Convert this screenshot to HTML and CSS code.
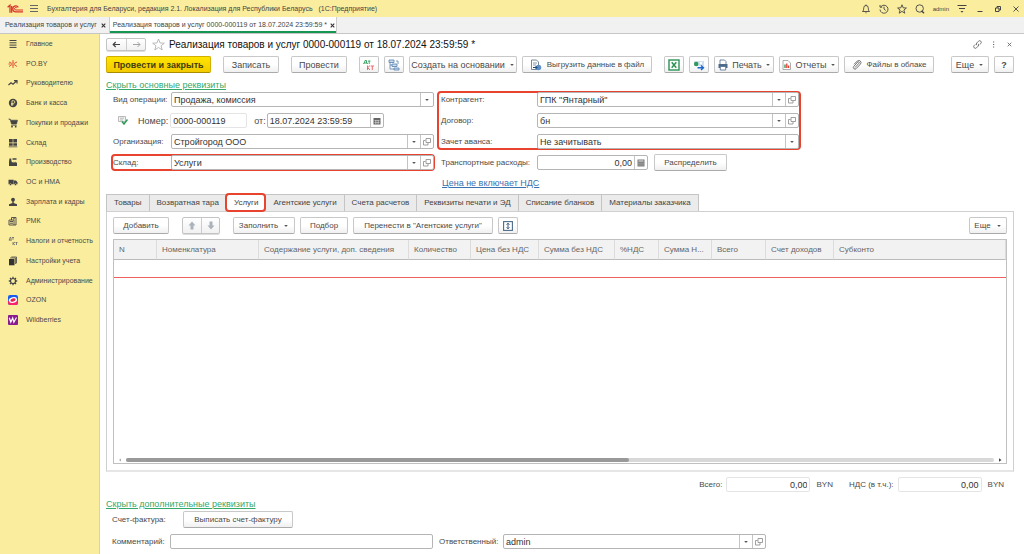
FILE: index.html
```
<!DOCTYPE html>
<html lang="ru">
<head>
<meta charset="utf-8">
<title>Реализация товаров и услуг</title>
<link rel="stylesheet" href="styles.css">
</head>
<body>
<svg class="defs" aria-hidden="true">
  <symbol id="open" viewBox="0 0 8 8"><path d="M3 .5h4.500v4H3zM2.500 2.500h-2v4.500h4.500v-2" fill="none" stroke="#888" stroke-width=".8"/></symbol>
  <symbol id="caret" viewBox="0 0 6 4"><path d="M1.200 1h3.600L3 3z" fill="#555"/></symbol>
</svg>
<header class="topbar">
  <svg class="logo" viewBox="0 0 17 10"><g fill="none" stroke="#d9342b" stroke-width="1.300"><path d="M.6 3.200 3 1.200v7.600M4.700 2v6.800"/><path d="M11.300 3.300A3 3 0 1 0 9 7.900h7"/><path d="M9.900 4A1.300 1.300 0 1 0 9 6h7" stroke-width="1"/></g></svg>
  <button class="bare" aria-label="Меню"><svg width="9" height="9" viewBox="0 0 9 9"><path d="M0 1.500h8M0 4.500h8M0 7.500h8" stroke="#666"/></svg></button>
  <span class="apptitle">Бухгалтерия для Беларуси, редакция 2.1. Локализация для Республики Беларусь &nbsp; (1С:Предприятие)</span>
  <div class="syscmds">
    <button class="bare" aria-label="Уведомления"><svg width="10" height="10" viewBox="0 0 10 10"><path d="M1.500 7.500h7C7.300 6.500 7.500 5.500 7.200 3.700A2.200 2.200 0 0 0 2.800 3.700C2.500 5.500 2.700 6.500 1.500 7.500zM5 1.500V.5" fill="none" stroke="#444" stroke-width=".9"/><path d="M4 8.500h2L5 9.500z" fill="#444"/></svg></button>
    <button class="bare" aria-label="История"><svg width="10" height="10" viewBox="0 0 10 10"><path d="M1.800 2.800A4 4 0 1 1 1 5.500M1 1v2.200h2.200M5 2.700V5l1.700 1.400" fill="none" stroke="#444" stroke-width=".9"/></svg></button>
    <button class="bare" aria-label="Избранное"><svg width="10" height="10" viewBox="0 0 10 10"><path d="M5 .8 6.200 3.800l3.200.2-2.500 2 .9 3.200L5 7.400 2.200 9.200l.9-3.200-2.500-2 3.200-.2z" fill="none" stroke="#444" stroke-width=".9"/></svg></button>
    <button class="bare" aria-label="Поиск"><svg width="10" height="10" viewBox="0 0 10 10"><circle cx="4.700" cy="4.500" r="3.700" fill="none" stroke="#444" stroke-width=".9"/><path d="m6.500 6.800 2.500 2.500" stroke="#444" stroke-width="1.400"/></svg></button>
    <a class="user" href="#">admin</a>
    <button class="bare" aria-label="Настройки"><svg width="10" height="10" viewBox="0 0 10 10"><path d="M.5 1.500h9M2 4.500h6" stroke="#444"/><path d="M3.500 7h3L5 8.800z" fill="#444"/></svg></button>
    <button class="bare win" aria-label="Свернуть"><svg width="8" height="8" viewBox="0 0 8 8"><path d="M1.500 6.500h5" stroke="#444"/></svg></button>
    <button class="bare win" aria-label="Развернуть"><svg width="8" height="8" viewBox="0 0 8 8"><path d="M1.500 3h3.500v3.500H1.500zM3 3V1.500h3.500V5H5" fill="none" stroke="#444"/></svg></button>
    <button class="bare win" aria-label="Закрыть"><svg width="8" height="8" viewBox="0 0 8 8"><path d="m1.500 1.500 5 5m0-5-5 5" stroke="#444" stroke-width=".9"/></svg></button>
  </div>
</header>
<nav class="wintabs">
  <div class="wintab"><a href="#">Реализация товаров и услуг</a><button class="bare" aria-label="Закрыть вкладку"><svg width="5" height="5" viewBox="0 0 5 5"><path d="m.7.7 3.600 3.600m0-3.600L.7 4.300" stroke="#333" stroke-width="1.100"/></svg></button></div>
  <div class="wintab current"><a href="#">Реализация товаров и услуг 0000-000119 от 18.07.2024 23:59:59 *</a><button class="bare" aria-label="Закрыть вкладку"><svg width="5" height="5" viewBox="0 0 5 5"><path d="m.7.7 3.600 3.600m0-3.600L.7 4.300" stroke="#333" stroke-width="1.100"/></svg></button></div>
</nav>
<div class="workspace">
  <nav class="sections">
    <ul>
      <li><a href="#"><svg viewBox="0 0 10 10"><path d="M1.500 1.500h7M1.500 3.800h7M1.500 6.100h7M1.500 8.400h7" stroke="#444"/></svg>Главное</a></li>
      <li><a href="#"><svg viewBox="0 0 10 10"><path d="M5 1v2.500M5 6.500V9M1 3l2.500 1.200M9 3 6.500 4.200M1 7.500l2.500-1.700M9 7.500 6.500 5.800M.5 5h2" stroke="#e0442f" stroke-width=".9"/><circle cx="5" cy="5" r="1.300" fill="none" stroke="#e0442f" stroke-width=".8"/></svg>PO.BY</a></li>
      <li><a href="#"><svg viewBox="0 0 10 10"><path d="m.5 7 2.500-2.300 2 1.500L8.500 3M6 2.700h3v2.800" fill="none" stroke="#444" stroke-width="1.200"/></svg>Руководителю</a></li>
      <li><a href="#"><svg viewBox="0 0 10 10"><circle cx="5" cy="5" r="4.200" fill="#444"/><path d="M4 8V2.700h1.500a1.300 1.300 0 0 1 0 2.700H3M3 6.700h2.500" fill="none" stroke="#fbed9e" stroke-width=".8"/></svg>Банк и касса</a></li>
      <li><a href="#"><svg viewBox="0 0 10 10"><path d="M.5 1h1.700l.4 1.200H9.500L8.500 6h-5L2.300 2" fill="#444" stroke="#444" stroke-width=".6"/><path d="M3.200 7.200h5.500" stroke="#444" stroke-width=".8"/><circle cx="4" cy="8.700" r=".9" fill="#444"/><circle cx="7.700" cy="8.700" r=".9" fill="#444"/></svg>Покупки и продажи</a></li>
      <li><a href="#"><svg viewBox="0 0 10 10"><path d="M1 1h3.700v3.500H1zM5.300 1H9v3.500H5.300zM1 5.200h3.700v2.600H1zM5.300 5.200H9v2.600H5.300zM.7 8.400h8.600v.8H.7z" fill="#444"/></svg>Склад</a></li>
      <li><a href="#"><svg viewBox="0 0 10 10"><path d="M1 9V4.500l.5-3h1.700l.3 3L5.500 6V4.500L7.300 6V4.500L9 6v3z" fill="#444"/><path d="M4.500 2h4" stroke="#444" stroke-width="1.500"/></svg>Производство</a></li>
      <li><a href="#"><svg viewBox="0 0 10 10"><path d="M.5 2.700h5.200v4.600H.5zM6 3.500h2l1.500 1.800v2H6z" fill="#444"/><circle cx="2.500" cy="7.500" r="1" fill="#444" stroke="#fbed9e" stroke-width=".4"/><circle cx="7.500" cy="7.500" r="1" fill="#444" stroke="#fbed9e" stroke-width=".4"/></svg>ОС и НМА</a></li>
      <li><a href="#"><svg viewBox="0 0 10 10"><circle cx="5" cy="2.700" r="1.900" fill="#444"/><path d="M4.300 4h1.400v2L9 7.200V9H1V7.200L4.300 6z" fill="#444"/></svg>Зарплата и кадры</a></li>
      <li><a href="#"><svg viewBox="0 0 10 10"><path d="M1 4h5v5H1zM3.500 4V1.500H8V9H6M2 5.500h3M2 7.200h3M5 2.800h2" fill="none" stroke="#444" stroke-width=".9"/></svg>РМК</a></li>
      <li><a href="#"><svg viewBox="0 0 10 10"><path d="M.8 4.200h3M1.300 4 2 1.500h1V4M4 1.500h2M5 1.500v2.300M5 6v3M7 6 5.200 7.500 7 9M7.500 6.500h2M8.500 6.500V9" fill="none" stroke="#666" stroke-width=".8"/></svg>Налоги и отчетность</a></li>
      <li><a href="#"><svg viewBox="0 0 10 10"><path d="M1 3h5.500v6.300H1z" fill="#333"/><path d="M2 2h5.600v6M3.300 1h5.200v6.300" fill="none" stroke="#444" stroke-width=".8"/></svg>Настройки учета</a></li>
      <li><a href="#"><svg viewBox="0 0 10 10"><circle cx="5" cy="5" r="2.500" fill="none" stroke="#444" stroke-width="1.200"/><path d="M5 .8v1.500M5 7.700v1.500M.8 5h1.500M7.700 5h1.500M2 2l1 1M7 7l1 1M8 2 7 3M3 7 2 8" stroke="#444" stroke-width="1.300"/></svg>Администрирование</a></li>
      <li><a href="#"><svg viewBox="0 0 10 10"><rect width="10" height="10" rx="2" fill="#1a5cf0"/><path d="M0 6h10v2a2 2 0 0 1-2 2H2a2 2 0 0 1-2-2z" fill="#f5266c"/><ellipse cx="5" cy="5" rx="4.200" ry="2.800" fill="#fff" transform="rotate(-15 5 5)"/><ellipse cx="5" cy="5" rx="2.700" ry="1.600" fill="#e8204f" transform="rotate(-15 5 5)"/></svg>OZON</a></li>
      <li><a href="#"><svg viewBox="0 0 10 10"><rect width="10" height="10" rx="1" fill="#8a1a8f"/><path d="m1.300 2.800 1.500 4.400L4.700 3l1.200 4.200L8.500 2.500" fill="none" stroke="#fff" stroke-width="1.200"/></svg>Wildberries</a></li>
    </ul>
  </nav>
  <main class="doc">
    <div class="titlerow">
      <div class="pair"><button aria-label="Назад"><svg width="9" height="7" viewBox="0 0 9 7"><path d="M1 3.500h7M3.700 1 1.200 3.500 3.700 6" fill="none" stroke="#444" stroke-width="1.200"/></svg></button><button aria-label="Вперед"><svg width="9" height="7" viewBox="0 0 9 7"><path d="M1 3.500h7M5.500 1 8 3.500 5.500 6" fill="none" stroke="#999" stroke-width=".9"/></svg></button></div>
      <button class="bare" aria-label="В избранное"><svg width="13" height="13" viewBox="0 0 13 13"><path d="m6.500 1 1.600 4 4.200.2-3.300 2.600 1.200 4.100-3.700-2.400-3.700 2.400L4 7.800.7 5.200 4.900 5z" fill="#fff" stroke="#aaa" stroke-width=".8"/></svg></button>
      <h1>Реализация товаров и услуг 0000-000119 от 18.07.2024 23:59:59 *</h1>
      <div class="formcmds">
        <button class="bare" aria-label="Ссылка"><svg width="9" height="9" viewBox="0 0 9 9"><path d="M3.800 5.200a1.700 1.700 0 0 1 0-2.300L5.500 1.200A1.600 1.600 0 0 1 7.800 3.500L6.700 4.600M5.200 3.800a1.700 1.700 0 0 1 0 2.300L3.500 7.800A1.600 1.600 0 0 1 1.200 5.500L2.300 4.400" fill="none" stroke="#666" stroke-width=".9"/></svg></button>
        <button class="bare" aria-label="Еще"><svg width="9" height="9" viewBox="0 0 9 9"><path d="M4 2h1.200M4 4.500h1.200M4 7h1.200" stroke="#666" stroke-width="1.200"/></svg></button>
        <button class="bare" aria-label="Закрыть"><svg width="9" height="9" viewBox="0 0 9 9"><path d="m2.700 2.700 3.600 3.600m0-3.600L2.700 6.300" stroke="#666" stroke-width=".9"/></svg></button>
      </div>
    </div>
    <div class="cmdbar">
      <button class="btn primary">Провести и закрыть</button>
      <button class="btn b56">Записать</button>
      <button class="btn b56">Провести</button>
      <div class="group">
        <button class="btn icon" aria-label="Проводки"><svg width="12" height="12" viewBox="0 0 12 12"><path d="M.8 5V4h3.500v1M1.500 4 2 1.500h1.500V4M5 2h2.500M6.200 2v3" fill="none" stroke="#2a9d57" stroke-width=".9"/><path d="M4.500 6.500V11M7 6.500 4.700 8.700 7 11M7.700 7H11M9.300 7v4" fill="none" stroke="#ea6b6b"/></svg></button>
        <button class="btn icon" aria-label="Структура"><svg width="12" height="12" viewBox="0 0 12 12"><path d="M1 1h5v2.500H1zM4 5h5v2.500H4zM6 9h5v2H6z" fill="#c9dbee" stroke="#5580ad" stroke-width=".8"/><path d="M2 3.500V10h4M2 6h2M8 2h2v3" fill="none" stroke="#5580ad" stroke-width=".8"/></svg></button>
        <button class="btn b108">Создать на основании<svg class="car"><use href="#caret"/></svg></button>
        <button class="btn b130"><svg width="12" height="12" viewBox="0 0 12 12"><path d="M1.500 1h5l2 2v7.500h-7z" fill="#fff" stroke="#6b7c8e" stroke-width=".9"/><path d="M3 4h4M3 6h3" stroke="#6b7c8e" stroke-width=".8"/><circle cx="8.500" cy="8.500" r="2.700" fill="#5b8fc7"/><path d="M3 8.500h4M5.500 7 7 8.500 5.500 10" fill="none" stroke="#1d4674"/></svg>Выгрузить данные в файл</button>
      </div>
      <div class="group">
        <button class="btn icon" aria-label="Excel"><svg width="12" height="12" viewBox="0 0 12 12"><rect x="1" y="1" width="10" height="10" fill="#fff" stroke="#2b9254" stroke-width="1.400"/><path d="m3.700 3.200 4.600 5.600m0-5.600L3.700 8.800" stroke="#2b9254" stroke-width="1.500"/></svg></button>
        <button class="btn icon" aria-label="Обмен"><svg width="12" height="12" viewBox="0 0 12 12"><path d="M1 2h10v5H1z" fill="#cfe0ef"/><circle cx="3.200" cy="5" r="2.200" fill="#2d9a57"/><circle cx="8" cy="4" r="1.200" fill="#fff"/><path d="M4.500 8.700H10M8 6.500l2.500 2.200L8 11" fill="none" stroke="#1d66d0" stroke-width="1.400"/></svg></button>
        <button class="btn b60"><svg width="12" height="12" viewBox="0 0 12 12"><path d="M3 5V1h4.500L9 2.500V5" fill="#fff" stroke="#4d6a8a" stroke-width=".8"/><path d="M1.500 5h9v4h-9z" fill="#4d6a8a"/><path d="M3.300 7.500h5.400V11H3.300z" fill="#fff" stroke="#4d6a8a" stroke-width=".8"/></svg>Печать<svg class="car"><use href="#caret"/></svg></button>
        <button class="btn b60"><svg width="10" height="12" viewBox="0 0 10 12"><path d="M1 1.500h5L8.500 4v6.500H1z" fill="#fff" stroke="#999" stroke-width=".8"/><path d="M3 9V5.500" stroke="#2b9254" stroke-width="1.300"/><path d="M4.800 9V4.500M6.600 9V6.500" stroke="#e23b2e" stroke-width="1.300"/></svg>Отчеты<svg class="car"><use href="#caret"/></svg></button>
        <button class="btn b90"><svg width="10" height="10" viewBox="0 0 10 10"><path d="M3 7.500 7 3.200a.8.800 0 0 0-1.200-1.200L1.800 6.300a1.600 1.600 0 0 0 2.400 2.300L8.500 4a2.200 2.200 0 0 0-3.200-3L2 4.300" fill="none" stroke="#666" stroke-width=".9"/></svg>Файлы в облаке</button>
      </div>
      <div class="group end">
        <button class="btn b38">Еще<svg class="car"><use href="#caret"/></svg></button>
        <button class="btn icon strong">?</button>
      </div>
    </div>
    <a class="toggle" href="#">Скрыть основные реквизиты</a>
    <div class="props">
      <div class="col">
        <div class="row"><label for="op">Вид операции:</label><div class="field"><select id="op"><option>Продажа, комиссия</option></select><span class="pick over"><svg class="car"><use href="#caret"/></svg></span></div></div>
        <div class="row numrow"><svg width="10" height="9" viewBox="0 0 10 9"><path d="M.5.500h7v5h-7z" fill="#f3f3f3" stroke="#aaa" stroke-width=".8"/><path d="M2 2.200h4M2 4h3" stroke="#aaa" stroke-width=".8"/><path d="m4 5.500 2 2.500L9.500 3.500" fill="none" stroke="#2d9a57" stroke-width="1.500"/></svg><label for="num">Номер:</label><div class="field pale num"><input id="num" value="0000-000119"></div><label for="dt">от:</label><div class="field date"><input id="dt" value="18.07.2024 23:59:59"><button class="pick" aria-label="Календарь"><svg width="8" height="8" viewBox="0 0 8 8"><path d="M.5 1h7v6.500h-7z" fill="#666"/><path d="M1.300 3.500h5.400M1.300 5.500h5.400M2.500 3v4M4 3v4M5.500 3v4" stroke="#ddd" stroke-width=".5"/></svg></button></div></div>
        <div class="row"><label for="org">Организация:</label><div class="field"><input id="org" value="Стройгород ООО"><button class="pick" aria-label="Выбрать"><svg class="car"><use href="#caret"/></svg></button><button class="pick" aria-label="Открыть"><svg class="opn"><use href="#open"/></svg></button></div></div>
        <div class="row marked"><label for="wh">Склад:</label><div class="field"><input id="wh" value="Услуги"><button class="pick" aria-label="Выбрать"><svg class="car"><use href="#caret"/></svg></button><button class="pick" aria-label="Открыть"><svg class="opn"><use href="#open"/></svg></button></div></div>
      </div>
      <div class="col wide">
        <div class="col marked">
          <div class="row"><label for="ca">Контрагент:</label><div class="field"><input id="ca" value="ГПК &quot;Янтарный&quot;"><button class="pick" aria-label="Выбрать"><svg class="car"><use href="#caret"/></svg></button><button class="pick" aria-label="Открыть"><svg class="opn"><use href="#open"/></svg></button></div></div>
          <div class="row"><label for="dog">Договор:</label><div class="field"><input id="dog" value="бн"><button class="pick" aria-label="Выбрать"><svg class="car"><use href="#caret"/></svg></button><button class="pick" aria-label="Открыть"><svg class="opn"><use href="#open"/></svg></button></div></div>
          <div class="row"><label for="adv">Зачет аванса:</label><div class="field"><select id="adv"><option>Не зачитывать</option></select><span class="pick over"><svg class="car"><use href="#caret"/></svg></span></div></div>
        </div>
        <div class="row"><label for="tr">Транспортные расходы:</label><div class="field sum"><input class="r" id="tr" value="0,00"><button class="pick" aria-label="Калькулятор"><svg width="8" height="8" viewBox="0 0 8 8"><path d="M.5.500h7v7h-7z" fill="#777"/><path d="M1.500 2h5" stroke="#eee"/><path d="M1.500 4.200h5M1.500 6h5" stroke="#ddd" stroke-width=".8" stroke-dasharray="1 1"/></svg></button></div><button class="btn b72">Распределить</button></div>
        <a class="price" href="#">Цена не включает НДС</a>
      </div>
    </div>
    <div class="tabs" role="tablist">
      <button role="tab">Товары</button><button role="tab">Возвратная тара</button><button role="tab" class="on" aria-selected="true">Услуги</button><button role="tab">Агентские услуги</button><button role="tab">Счета расчетов</button><button role="tab">Реквизиты печати и ЭД</button><button role="tab">Списание бланков</button><button role="tab">Материалы заказчика</button>
    </div>
    <section class="panel">
      <div class="tools">
        <button class="btn b56">Добавить</button>
        <div class="pair"><button aria-label="Вверх"><svg width="8" height="9" viewBox="0 0 8 9"><path d="M4 .5 7.500 4.500h-2v4h-3v-4h-2z" fill="#aab2bb"/></svg></button><button aria-label="Вниз"><svg width="8" height="9" viewBox="0 0 8 9"><path d="M4 8.500 7.500 4.500h-2v-4h-3v4h-2z" fill="#aab2bb"/></svg></button></div>
        <div class="group">
          <button class="btn b62">Заполнить<svg class="car"><use href="#caret"/></svg></button>
          <button class="btn b48">Подбор</button>
          <button class="btn b140">Перенести в "Агентские услуги"</button>
          <button class="btn icon" aria-label="Строки"><svg width="10" height="10" viewBox="0 0 10 10"><rect x=".6" y=".6" width="8.800" height="8.800" fill="#fff" stroke="#4d6a8a" stroke-width="1.100"/><path d="M5 2.500v5M3.600 3.700 5 2.200l1.400 1.500M3.600 6.300 5 7.800l1.400-1.500" fill="none" stroke="#24486f" stroke-width=".9"/></svg></button>
        </div>
        <button class="btn b38 end">Еще<svg class="car"><use href="#caret"/></svg></button>
      </div>
      <div class="gridbox">
        <table>
          <colgroup><col class="c43"><col class="c102"><col class="c150"><col class="c62"><col class="c68"><col class="c76"><col class="c44"><col class="c53"><col class="c54"><col class="c68"><col></colgroup>
          <thead><tr><th>N</th><th>Номенклатура</th><th>Содержание услуги, доп. сведения</th><th>Количество</th><th>Цена без НДС</th><th>Сумма без НДС</th><th>%НДС</th><th>Сумма Н...</th><th>Всего</th><th>Счет доходов</th><th>Субконто</th></tr></thead>
          <tbody><tr><td colspan="11"></td></tr></tbody>
        </table>
        <div class="hscroll"><svg width="4" height="4" viewBox="0 0 4 4"><path d="M3 .5v3L1 2z" fill="#aaa"/></svg><div class="track"><div class="thumb"></div></div><svg width="4" height="4" viewBox="0 0 4 4"><path d="M1 .2v3.600L3.500 2z" fill="#444"/></svg></div>
      </div>
    </section>
    <div class="totals">
      <label for="t1">Всего:</label><div class="field pale tot"><input class="r" id="t1" value="0,00" readonly></div><span class="cur">BYN</span>
      <label for="t2">НДС (в т.ч.):</label><div class="field pale tot"><input class="r" id="t2" value="0,00" readonly></div><span>BYN</span>
    </div>
    <a class="toggle" href="#">Скрыть дополнительные реквизиты</a>
    <div class="foot invoice"><span>Счет-фактура:</span><button class="btn b110">Выписать счет-фактуру</button></div>
    <div class="foot"><label for="cm">Комментарий:</label><div class="field"><input id="cm"></div><label class="resp" for="rs">Ответственный:</label><div class="field"><input id="rs" value="admin"><button class="pick" aria-label="Выбрать"><svg class="car"><use href="#caret"/></svg></button><button class="pick" aria-label="Открыть"><svg class="opn"><use href="#open"/></svg></button></div></div>
  </main>
</div>
</body>
</html>
```
FILE: styles.css
```
* { box-sizing: border-box; }
body {
  margin: 0;
  height: 100vh;
  display: flex;
  flex-direction: column;
  background: #fff;
  color: #4a4a4a;
  font: 8px/12px "Liberation Sans", Arial, sans-serif;
  white-space: nowrap;
}
button, input, select { font: inherit; color: inherit; margin: 0; padding: 0; }
a { color: inherit; text-decoration: none; }
svg { flex: none; display: block; }
.defs { position: absolute; width: 0; height: 0; }
.bare { border: 0; background: none; display: flex; align-items: center; justify-content: center; }
.car { width: 6px; height: 4px; }
.opn { width: 8px; height: 8px; }

.topbar { display: flex; align-items: center; height: 17px; padding: 0 3px 0 7px; background: #fbed9e; font-size: 7px; color: #444; }
.logo { width: 17px; height: 10px; margin-right: 6px; }
.apptitle { margin-left: 8px; }
.syscmds { display: flex; align-items: center; gap: 8px; margin-left: auto; }
.user { font-size: 6px; }
.win { width: 10px; }

.wintabs { display: flex; height: 17px; background: #f1f1f1; border-bottom: 1px solid #c6c6c6; font-size: 7px; color: #444; }
.wintab { display: flex; align-items: center; gap: 4px; padding: 0 3px 0 5px; border-right: 1px solid #ccc; }
.wintab.current { padding: 0 1px 0 3px; gap: 3px; background: #fff; box-shadow: inset 0 -2px #169553; }

.workspace { flex: 1; min-height: 0; display: flex; }
.sections { width: 100px; flex: none; background: #fbed9e; border-right: 1px solid #ddd3a0; font-size: 7px; }
.sections ul { list-style: none; margin: 0; padding: 0; height: 296px; display: grid; grid-auto-rows: 1fr; }
.sections a { display: flex; align-items: center; gap: 8px; height: 100%; padding-left: 8px; }
.sections svg { width: 10px; height: 10px; }

.doc { flex: 1; min-width: 0; display: flex; flex-direction: column; padding: 4px 10px 5px 6px; }
.titlerow { display: flex; align-items: center; height: 13px; }
.pair { display: flex; border: 1px solid #c4c4c4; border-radius: 2px; background: linear-gradient(#fff, #f1f1f1); box-shadow: 0 1px #ddd; height: 13px; }
.pair button { display: flex; align-items: center; justify-content: center; width: 19px; border: 0; background: none; }
.pair button + button { border-left: 1px solid #ccc; }
.titlerow .bare { margin-left: 6px; }
h1 { margin: 0 0 0 4px; font-size: 10px; line-height: 13px; font-weight: 400; color: #111; }
.formcmds { display: flex; gap: 1px; margin-left: auto; }

.btn { display: flex; align-items: center; justify-content: center; gap: 5px; height: 17px; border: 1px solid #c8c8c8; border-bottom-color: #aaa; border-radius: 2px; background: linear-gradient(#fff 50%, #f0f0f0); }
.primary { width: 105px; font-weight: 700; color: #443c08; background: linear-gradient(#ffe400, #f2cb00); border-color: #d1ae00; border-bottom-color: #a88c00; }
.icon { width: 20px; }
.strong { font-weight: 700; }
.b38 { width: 38px; }
.b48 { width: 48px; }
.b56 { width: 56px; }
.b60 { width: 60px; }
.b62 { width: 62px; }
.b72 { width: 73px; }
.b90 { width: 90px; }
.b108 { width: 108px; }
.b110 { width: 110px; }
.b130 { width: 130px; }
.b140 { width: 140px; }
.cmdbar { display: flex; gap: 12px; margin-top: 5px; font-size: 9px; }
.cmdbar .btn { gap: 4px; }
.cmdbar .b130, .cmdbar .b90 { font-size: 8px; gap: 5px; }
.cmdbar .b60 { gap: 3px; }
.group { display: flex; gap: 5px; }
.end { margin-left: auto; }

.toggle { align-self: flex-start; margin-top: 6px; font-size: 9px; color: #35a86b; text-decoration: underline; }
.props { display: flex; gap: 4px; margin-top: 1px; padding-left: 6px; }
.col { display: flex; flex-direction: column; gap: 6px; width: 322px; }
.wide { width: 362px; }
.wide > .col { width: auto; }
.wide .row { padding: 0 1px 0 3px; }
.row { display: flex; align-items: center; height: 15px; }
.row > label:first-child { width: 59px; padding-left: 1px; }
.wide .row > label:first-child { width: 96px; padding: 0; }
.marked { outline: 2px solid #e8432f; outline-offset: -1px; border-radius: 3px; }
.field { position: relative; display: flex; flex: 1; height: 15px; border: 1px solid #b5b5b5; border-radius: 2px; background: #fff; color: #333; font-size: 9px; }
.field input, .field select { flex: 1; width: 100%; min-width: 0; border: 0; background: none; padding-left: 2px; outline: 0; appearance: none; }
.field .r { text-align: right; padding-right: 2px; }
.pick { display: flex; align-items: center; justify-content: center; width: 13px; border: 0; border-left: 1px solid #c4c4c4; background: none; }
.over { position: absolute; top: 0; right: 0; bottom: 0; pointer-events: none; }
.pale { border-color: #e4e4e4; }
.numrow { padding-left: 6px; }
.numrow label { margin-left: 10px; font-size: 9px; }
.num { flex: none; width: 77px; margin-left: 2px; }
.numrow .num + label { margin-left: 7px; }
.date { flex: none; width: 117px; margin-left: 1px; }
.wide .sum { flex: none; width: 111px; margin-right: 6px; }
.price { align-self: flex-start; margin: 1px 0 0 4px; font-size: 9px; color: #3a72b0; text-decoration: underline; }

.tabs { display: flex; margin-top: 5px; }
.tabs button { height: 17px; padding: 0 7px; border: 1px solid #c4c4c4; border-bottom: 0; border-right: 0; background: #ebebeb; color: #444; }
.tabs button:last-child { border-right: 1px solid #c4c4c4; }
.tabs .on { background: #fff; position: relative; outline: 2px solid #e8432f; outline-offset: -1px; border-radius: 3px; }
.panel { flex: 1; min-height: 0; display: flex; flex-direction: column; padding: 5px 6px 6px; border: 1px solid #d0d0d0; border-bottom: 2px solid #e6e6e6; }
.tools { display: flex; gap: 13px; }
.tools .pair { height: 17px; }
.tools .pair button { width: 18px; }
.gridbox { flex: 1; display: flex; flex-direction: column; margin-top: 5px; border: 1px solid #c0c0c0; overflow: hidden; }
table { width: 100%; table-layout: fixed; border-collapse: separate; border-spacing: 0; }
th { height: 20px; padding: 0 5px; background: #f2f2f2; border-right: 1px solid #dcdcdc; border-bottom: 1px solid #bbb; font-weight: 400; text-align: left; color: #666; }
td { height: 18px; padding: 0; border-bottom: 1px solid #ee5f5f; }
.c43 { width: 43px; }
.c44 { width: 44px; }
.c53 { width: 53px; }
.c54 { width: 54px; }
.c62 { width: 62px; }
.c68 { width: 68px; }
.c76 { width: 76px; }
.c102 { width: 102px; }
.c150 { width: 150px; }
.hscroll { display: flex; align-items: center; gap: 4px; margin-top: auto; padding: 1px 4px; height: 7px; }
.track { flex: 1; height: 4px; border-radius: 2px; background: #d8d8d8; }
.thumb { width: 58%; height: 4px; border-radius: 2px; background: #999; }

.totals { display: flex; align-items: center; margin-top: 5px; padding-right: 10px; justify-content: flex-end; }
.tot { flex: none; width: 84px; margin: 0 6px 0 4px; }
.cur { margin-right: 16px; }
.foot { display: flex; align-items: center; padding-left: 6px; }
.invoice { margin: 1px 0 6px; }
.foot > :first-child { width: 58px; }
.invoice > :first-child { width: 71px; }
.foot .field { flex: none; width: 263px; }
.resp { width: 64px; margin-left: 6px; }
```
